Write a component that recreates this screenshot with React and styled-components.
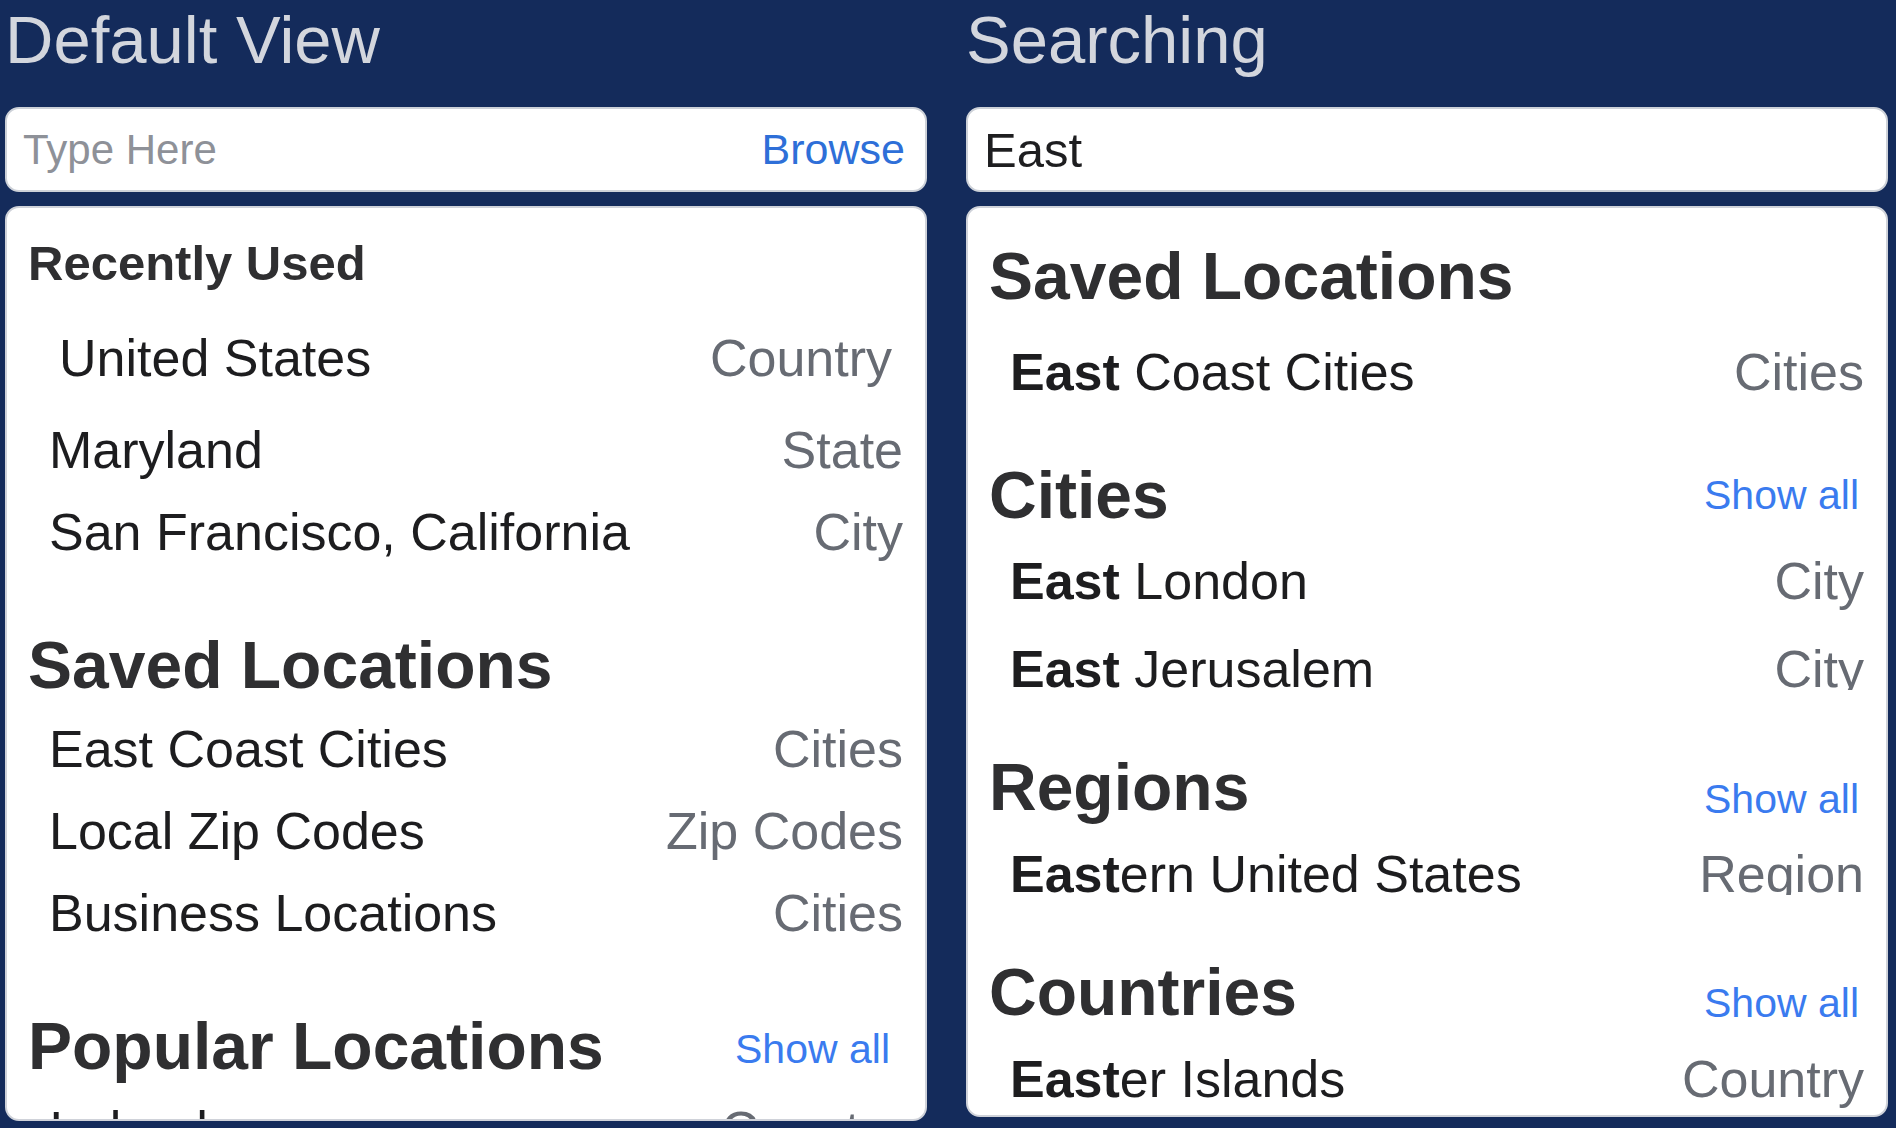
import React from "react";
import styled, { createGlobalStyle } from "styled-components";

const GlobalStyle = createGlobalStyle`
  html, body {
    margin: 0;
    padding: 0;
    background: #142b5b;
    overflow: hidden;
  }
  body {
    font-family: "Liberation Sans", Arial, sans-serif;
  }
`;

const Page = styled.div`
  display: grid;
  grid-template-columns: 922px 922px;
  column-gap: 39px;
  padding-left: 5px;
  height: 1128px;
`;

const Column = styled.div`
  display: flex;
  flex-direction: column;
  min-height: 0;
`;

const Title = styled.h1`
  margin: 0;
  height: 80px;
  font-size: 67px;
  line-height: 80px;
  font-weight: 400;
  color: #d3d6dd;
  white-space: nowrap;
`;

const SearchBox = styled.div`
  margin-top: 27px;
  height: 85px;
  box-sizing: border-box;
  display: flex;
  align-items: center;
  justify-content: space-between;
  padding: 0 20px 0 16px;
  background: #fff;
  border: 2px solid #cdd1d8;
  border-radius: 14px;
`;

const Placeholder = styled.span`
  font-size: 42px;
  color: #8e9198;
`;

const Query = styled.span`
  font-size: 49px;
  color: #1e1e20;
`;

const Browse = styled.span`
  font-size: 43px;
  color: #2e6fd8;
`;

const Card = styled.div`
  margin-top: 14px;
  margin-bottom: ${({ $bottom }) => $bottom}px;
  flex: 1;
  min-height: 0;
  box-sizing: border-box;
  padding: 25px 22px 0 21px;
  background: #fff;
  border: 2px solid #cfd2d9;
  border-radius: 14px;
  overflow: hidden;
`;

const SubHeader = styled.h3`
  margin: 0 0 24px 0;
  height: 60px;
  font-size: 49px;
  line-height: 60px;
  font-weight: 700;
  color: #2f2f31;
`;

const Section = styled.section`
  margin-top: ${({ $top }) => $top}px;
`;

const HeaderRow = styled.div`
  display: flex;
  justify-content: space-between;
  align-items: flex-end;
  height: 80px;
  margin-bottom: ${({ $after }) => $after}px;
`;

const Heading = styled.h2`
  margin: 0;
  font-size: 66px;
  line-height: 80px;
  font-weight: 700;
  color: #2f2f31;
  white-space: nowrap;
`;

const ShowAll = styled.a`
  font-size: 41px;
  line-height: 50px;
  color: #3a7bef;
  text-decoration: none;
  margin-bottom: ${({ $lift }) => $lift}px;
  margin-right: ${({ $inset }) => $inset}px;
`;

const Row = styled.div`
  display: flex;
  justify-content: space-between;
  align-items: flex-start;
  height: ${({ $h }) => $h}px;
  line-height: ${({ $h }) => $h}px;
  padding-left: 21px;
  font-size: 52px;
  white-space: nowrap;
`;

const FeaturedRow = styled(Row)`
  padding-left: 31px;
  padding-right: 11px;
  margin-bottom: 10px;
`;

const Name = styled.span`
  color: #1d1d1f;

  b {
    font-weight: 700;
  }
`;

const Kind = styled.span`
  color: #676b73;
  display: block;
  height: ${({ $clip }) => ($clip ? `${$clip}px` : "auto")};
  overflow: hidden;
`;

const recent = [
  { name: "Maryland", kind: "State" },
  { name: "San Francisco, California", kind: "City" },
];

const saved = [
  { name: "East Coast Cities", kind: "Cities" },
  { name: "Local Zip Codes", kind: "Zip Codes" },
  { name: "Business Locations", kind: "Cities" },
];

const results = [
  {
    title: "Saved Locations",
    top: 3,
    after: 12,
    items: [{ match: "East", rest: " Coast Cities", kind: "Cities" }],
  },
  {
    title: "Cities",
    top: 39,
    after: 2,
    lift: 15,
    items: [
      { match: "East", rest: " London", kind: "City" },
      { match: "East", rest: " Jerusalem", kind: "City", clip: 65 },
    ],
  },
  {
    title: "Regions",
    top: 34,
    after: 3,
    lift: 3,
    items: [{ match: "East", rest: "ern United States", kind: "Region", clip: 65 }],
  },
  {
    title: "Countries",
    top: 34,
    after: 3,
    lift: 4,
    items: [{ match: "East", rest: "er Islands", kind: "Country" }],
  },
];

function DefaultView() {
  return (
    <Column>
      <Title>Default View</Title>
      <SearchBox>
        <Placeholder>Type Here</Placeholder>
        <Browse>Browse</Browse>
      </SearchBox>
      <Card $bottom={7}>
        <SubHeader>Recently Used</SubHeader>
        <FeaturedRow $h={82}>
          <Name>United States</Name>
          <Kind>Country</Kind>
        </FeaturedRow>
        {recent.map((r) => (
          <Row key={r.name} $h={82}>
            <Name>{r.name}</Name>
            <Kind>{r.kind}</Kind>
          </Row>
        ))}

        <Section $top={52}>
          <HeaderRow $after={3}>
            <Heading>Saved Locations</Heading>
          </HeaderRow>
          {saved.map((r) => (
            <Row key={r.name} $h={82}>
              <Name>{r.name}</Name>
              <Kind>{r.kind}</Kind>
            </Row>
          ))}
        </Section>

        <Section $top={52}>
          <HeaderRow $after={3}>
            <Heading>Popular Locations</Heading>
            <ShowAll href="#" $lift={12} $inset={13}>Show all</ShowAll>
          </HeaderRow>
          <Row $h={82}>
            <Name>Ireland</Name>
            <Kind>Country</Kind>
          </Row>
        </Section>
      </Card>
    </Column>
  );
}

function SearchingView() {
  return (
    <Column>
      <Title>Searching</Title>
      <SearchBox>
        <Query>East</Query>
      </SearchBox>
      <Card $bottom={11}>
        {results.map((group) => (
          <Section key={group.title} $top={group.top}>
            <HeaderRow $after={group.after}>
              <Heading>{group.title}</Heading>
              {group.lift !== undefined && (
                <ShowAll href="#" $lift={group.lift} $inset={5}>Show all</ShowAll>
              )}
            </HeaderRow>
            {group.items.map((it) => (
              <Row key={it.rest} $h={88}>
                <Name>
                  <b>{it.match}</b>
                  {it.rest}
                </Name>
                <Kind $clip={it.clip}>{it.kind}</Kind>
              </Row>
            ))}
          </Section>
        ))}
      </Card>
    </Column>
  );
}

export default function App() {
  return (
    <>
      <GlobalStyle />
      <Page>
        <DefaultView />
        <SearchingView />
      </Page>
    </>
  );
}
